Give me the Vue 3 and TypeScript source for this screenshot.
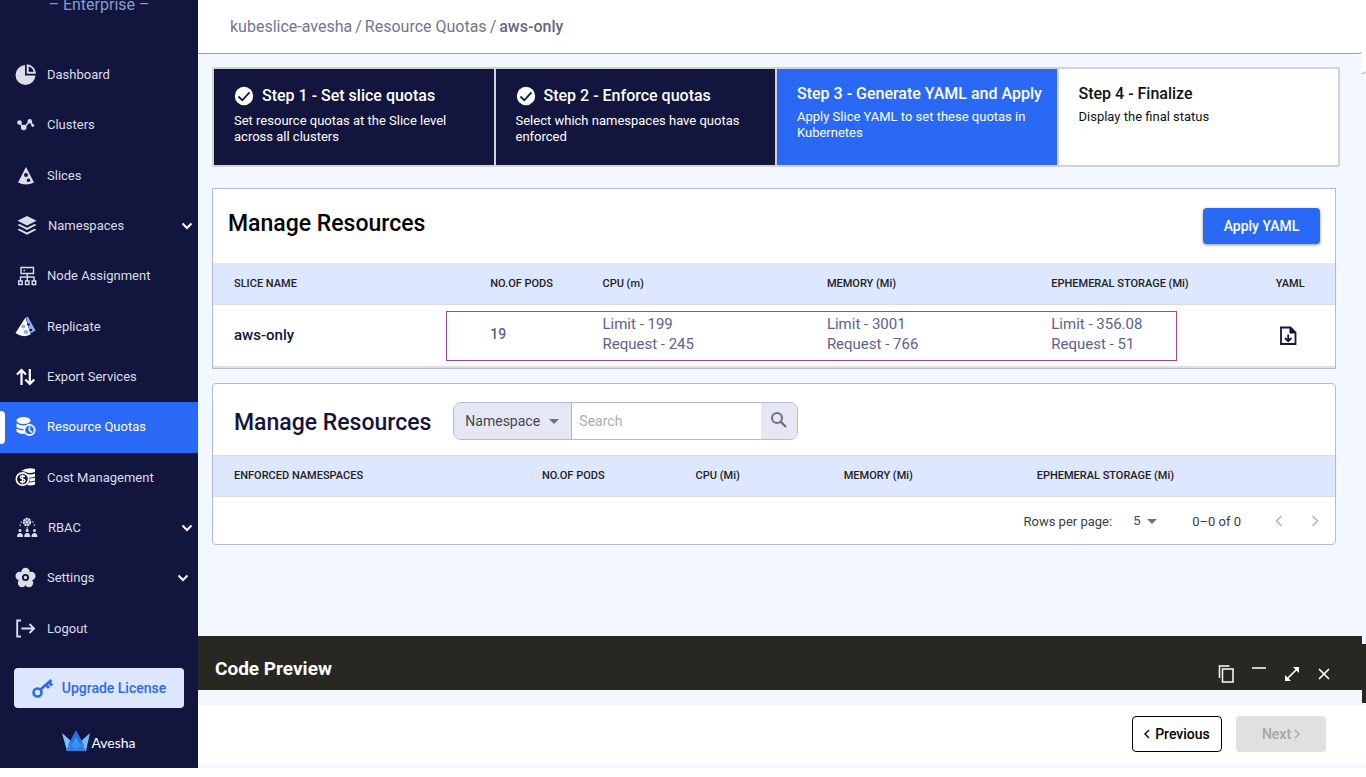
<script setup lang="ts">
import { ref } from 'vue'

interface NavItem {
  label: string
  icon: string
  indent?: boolean
  chevron?: boolean
  active?: boolean
}

const navItems: NavItem[] = [
  { label: 'Dashboard', icon: 'dashboard' },
  { label: 'Clusters', icon: 'clusters' },
  { label: 'Slices', icon: 'slices' },
  { label: 'Namespaces', icon: 'layers', indent: true, chevron: true },
  { label: 'Node Assignment', icon: 'nodes' },
  { label: 'Replicate', icon: 'replicate' },
  { label: 'Export Services', icon: 'export' },
  { label: 'Resource Quotas', icon: 'quotas', active: true },
  { label: 'Cost Management', icon: 'cost' },
  { label: 'RBAC', icon: 'rbac', indent: true, chevron: true },
  { label: 'Settings', icon: 'settings', chevron: true },
  { label: 'Logout', icon: 'logout' },
]

const steps = [
  { title: 'Step 1 - Set slice quotas', text: 'Set resource quotas at the Slice level across all clusters', state: 'done' },
  { title: 'Step 2 - Enforce quotas', text: 'Select which namespaces have quotas enforced', state: 'done' },
  { title: 'Step 3 - Generate YAML and Apply', text: 'Apply Slice YAML to set these quotas in Kubernetes', state: 'current' },
  { title: 'Step 4 - Finalize', text: 'Display the final status', state: 'todo' },
]

const sliceColumns = ['SLICE NAME', 'NO.OF PODS', 'CPU (m)', 'MEMORY (Mi)', 'EPHEMERAL STORAGE (Mi)', 'YAML']
const slices = [
  {
    name: 'aws-only',
    pods: 19,
    usage: [
      { limit: '199', request: '245' },
      { limit: '3001', request: '766' },
      { limit: '356.08', request: '51' },
    ],
  },
]
const namespaceColumns = ['ENFORCED NAMESPACES', 'NO.OF PODS', 'CPU (Mi)', 'MEMORY (Mi)', 'EPHEMERAL STORAGE (Mi)']

const searchField = ref('Namespace')
const search = ref('')
const rowsPerPage = ref('5')
</script>

<template>
  <div class="app">
    <aside class="sidebar">
      <div class="edition">– Enterprise –</div>
      <nav class="nav">
        <a v-for="item in navItems" :key="item.label" href="#" class="nav-item" :class="{ active: item.active, indent: item.indent }">
          <svg class="nav-icon" viewBox="0 0 22 22" aria-hidden="true">
            <g v-if="item.icon === 'dashboard'" fill="currentColor">
              <path d="M10 1A10 10 0 1 0 20.500 11.500H10z" />
              <path fill-rule="evenodd" d="M11.700 .3A9.600 9.600 0 0 1 21 9.700H11.700zM13.700 2.500V7.800h5A7 7 0 0 0 13.700 2.500z" />
            </g>
            <g v-else-if="item.icon === 'clusters'" fill="currentColor">
              <path d="M4.500 8.500l4 5.500L15 7l3 5" fill="none" stroke="currentColor" stroke-width="1.500" />
              <circle cx="4.500" cy="8.500" r="2.300" /><circle cx="8.700" cy="13.500" r="2.800" />
              <circle cx="14.800" cy="7.300" r="2.300" /><circle cx="17.800" cy="11.500" r="1.400" />
            </g>
            <path v-else-if="item.icon === 'slices'" fill="currentColor" fill-rule="evenodd"
              d="M11 2L3 17.500q8 4 16 0zM11 8a2 2 0 1 1 0 4 2 2 0 0 1 0-4zM13.500 13.500a1.800 1.800 0 1 1 0 3.600 1.800 1.800 0 0 1 0-3.600z" />
            <g v-else-if="item.icon === 'layers'" fill="currentColor">
              <path d="M11 1L1.500 5.700l9.500 4.800 9.500-4.800z" />
              <path d="M1.500 10l2-1 7.500 3.800L18.500 9l2 1-9.500 5zM1.500 14.800l2-1 7.500 3.800 7.500-3.800 2 1-9.500 5z" />
            </g>
            <g v-else-if="item.icon === 'nodes'" fill="none" stroke="currentColor" stroke-width="1.400">
              <path d="M6 2.500h12.500v6H6zM8.500 5.500H10M12.200 8.500V16M5.500 16v-4h13.500v4" />
              <path d="M3.700 16h3.500v3.500H3.700zM10.500 16H14v3.500h-3.500zM17.200 16h3.500v3.500h-3.500z" />
            </g>
            <g v-else-if="item.icon === 'replicate'">
              <path d="M11 1h2l7.500 13.500-5 3z" fill="#8db2fb" />
              <path d="M10.500 1.500L.5 17q7 5.500 15 1.500z" fill="#fff" />
              <g fill="#8db2fb"><circle cx="8.300" cy="10.500" r="2.100" /><circle cx="11" cy="16" r="2.200" /></g>
              <g fill="#12153d"><circle cx="13.500" cy="8.500" r="1.200" /><circle cx="16" cy="14" r="1.300" /></g>
            </g>
            <path v-else-if="item.icon === 'export'" fill="none" stroke="#fff" stroke-width="2.200"
              d="M6.500 19V4.500M2 8.500l4.500-4.500L11 8.500M14.800 3v14M10.300 13.500l4.500 4.500 4.500-4.500" />
            <g v-else-if="item.icon === 'quotas'" fill="#fff">
              <ellipse cx="8.500" cy="4.500" rx="7" ry="3.500" />
              <path d="M1.500 7.500q7 4 14 0v2q-5 .5-6 3.500-5 .5-8-2zM1.500 12.500q3.500 2 7.500 2 0 2 .8 3.500-6 0-8.300-2.500z" />
              <circle cx="14.500" cy="14" r="5.200" fill="#2969f6" stroke="#fff" stroke-width="1.700" />
              <path d="M14.500 10.500v4l2.500 1.800" fill="none" stroke="#fff" stroke-width="1.500" />
            </g>
            <g v-else-if="item.icon === 'cost'" fill="#fff">
              <path d="M6 4q6-4 14-2v3q-6 2-9 0-3-1-5-1zM12 7q4 1 8-.5v3q-3 1.500-6 1zM14.500 11.500q3 .3 5.500-1v3q-2 1.300-5.500 1zM14 15.500q4 0 6-1v3q-4 1.500-8 .5z" />
              <circle cx="7.500" cy="12" r="6.200" fill="#12153d" stroke="#fff" stroke-width="1.700" />
              <path d="M10 9.700q-2.500-1.500-4.200-.5-1.300 1.800 1.700 2.700 3.300.8 2 2.700-1.700 1.200-4.500-.3M7.500 7.500v9" fill="none" stroke="#fff" stroke-width="1.400" />
            </g>
            <g v-else-if="item.icon === 'rbac'" fill="currentColor">
              <circle cx="11" cy="5" r="3" fill="none" stroke="currentColor" stroke-width="2.500" stroke-dasharray="2 .5" />
              <circle cx="11" cy="5" r="1.500" />
              <path d="M6 4.500q-2 .5-2 6M16 4.500q2.500.5 2.500 6M11.200 10v3" fill="none" stroke="currentColor" stroke-dasharray="2 1.500" />
              <circle cx="4" cy="13.500" r="1.500" /><circle cx="11.200" cy="13.500" r="1.500" /><circle cx="18.500" cy="13.500" r="1.500" />
              <path d="M1 20q0-4 3-4t3 4zM8.200 20q0-4 3-4t3 4zM15.500 20q0-4 3-4t3 4z" />
            </g>
            <g v-else-if="item.icon === 'settings'" fill="currentColor">
              <circle cx="10.500" cy="5" r="4.200" /><circle cx="4.700" cy="9" r="4.200" /><circle cx="16.300" cy="9" r="4.200" />
              <circle cx="7" cy="16" r="4.200" /><circle cx="14" cy="16" r="4.200" /><circle cx="10.500" cy="11" r="6" />
              <circle cx="10.500" cy="10.500" r="2.600" fill="none" stroke="#12153d" stroke-width="1.900" />
            </g>
            <g v-else fill="none" stroke="currentColor" stroke-width="1.900">
              <path d="M6 2.500H2.200v16H6M6.500 10.500h12.500M14.500 6l4.500 4.500-4.500 4.500" />
            </g>
          </svg>
          <span class="nav-label">{{ item.label }}</span>
          <svg v-if="item.chevron" class="chevron" viewBox="0 0 12 12" aria-hidden="true">
            <path d="M1.500 3.500L6 8l4.500-4.500" fill="none" stroke="#fff" stroke-width="2" />
          </svg>
        </a>
      </nav>
      <div class="side-foot">
        <button type="button" class="upgrade">
          <svg viewBox="0 0 22 20" width="22" height="20" aria-hidden="true" fill="none" stroke="#2969f6">
            <circle cx="5.500" cy="14.500" r="4" stroke-width="2.500" />
            <path d="M8.500 11.500L19.500 2M14 6.500l3 3.500M17 4l3 3.500" stroke-width="2.700" />
          </svg>
          Upgrade License
        </button>
        <div class="brand">
          <svg viewBox="0 0 28 22" width="28" height="22" aria-hidden="true">
            <path d="M0 3l10 9-3 9H5z" fill="#7cc3f8" />
            <path d="M28 3l-10 9 3 9h3z" fill="#6bbcf7" />
            <path d="M14 0L6 15l8 6 8-6z" fill="#2b6de4" />
            <path d="M14 7L9 16l5 5 5-5z" fill="#2f97ee" />
            <path d="M4 21l4-9 3 3-6 6zM24 21l-4-9-3 3 6 6z" fill="#3a86e8" />
            <path d="M5 21l4.500-5 4.500 3 4.500-3 4.500 5z" fill="#3478e6" />
          </svg>
          <span>Avesha</span>
        </div>
      </div>
    </aside>

    <main class="main">
      <header class="crumbs">
        <a href="#">kubeslice-avesha</a><span>/</span><a href="#">Resource Quotas</a><span>/</span><b>aws-only</b>
      </header>

      <div class="content">
        <ol class="steps">
          <li v-for="step in steps" :key="step.title" class="step" :class="step.state">
            <div class="step-title">
              <svg v-if="step.state === 'done'" viewBox="0 0 20 20" width="20" height="20" aria-hidden="true">
                <circle cx="10" cy="10" r="9.200" fill="#fff" />
                <path d="M4.500 10.500l3.800 3.800 7.200-8" fill="none" stroke="#12153d" stroke-width="1.800" />
              </svg>
              {{ step.title }}
            </div>
            <p>{{ step.text }}</p>
          </li>
        </ol>

        <section class="card slices-card">
          <div class="card-head">
            <h2>Manage Resources</h2>
            <button type="button" class="apply">Apply YAML</button>
          </div>
          <div class="table-wrap">
            <table class="slice-table">
              <thead>
                <tr><th v-for="c in sliceColumns" :key="c" scope="col">{{ c }}</th></tr>
              </thead>
              <tbody>
                <tr v-for="s in slices" :key="s.name">
                  <td class="name">{{ s.name }}</td>
                  <td class="pods">{{ s.pods }}</td>
                  <td v-for="(u, i) in s.usage" :key="i" class="usage">
                    <div>Limit - {{ u.limit }}</div>
                    <div>Request - {{ u.request }}</div>
                  </td>
                  <td class="file">
                    <button type="button" class="icon-btn" aria-label="Download YAML">
                      <svg viewBox="0 0 18 20" width="18" height="20" aria-hidden="true" fill="none" stroke="#12153d" stroke-width="1.800">
                        <path d="M2 1.500h9.500l5 5V18H2z" />
                        <path d="M11 1v6h6z" fill="#12153d" stroke-width="1" />
                        <path d="M9.200 8.500v6.500M6 12l3.200 3.200L12.400 12" />
                      </svg>
                    </button>
                  </td>
                </tr>
              </tbody>
            </table>
            <div class="highlight"></div>
          </div>
        </section>

        <section class="card ns-card">
          <div class="ns-head">
            <h2>Manage Resources</h2>
            <form class="search" role="search" @submit.prevent>
              <div class="select-wrap">
                <select v-model="searchField" aria-label="Search by"><option>Namespace</option></select>
                <svg class="caret" viewBox="0 0 10 5" aria-hidden="true"><path d="M0 0h10L5 5z" fill="#707078" /></svg>
              </div>
              <input v-model="search" type="text" placeholder="Search" aria-label="Search" />
              <button type="submit" aria-label="Run search">
                <svg viewBox="0 0 18 18" width="18" height="18" aria-hidden="true" fill="none" stroke="#707078" stroke-width="2">
                  <circle cx="7" cy="7" r="5" /><path d="M10.500 10.500L16 16" stroke-width="2.400" />
                </svg>
              </button>
            </form>
          </div>
          <table class="ns-table">
            <thead>
              <tr><th v-for="c in namespaceColumns" :key="c" scope="col">{{ c }}</th></tr>
            </thead>
          </table>
          <div class="pager">
            <label for="rows">Rows per page:</label>
            <div class="rows-wrap">
              <select id="rows" v-model="rowsPerPage"><option>5</option></select>
              <svg class="caret" viewBox="0 0 10 5" aria-hidden="true"><path d="M0 0h10L5 5z" fill="#707078" /></svg>
            </div>
            <span class="range">0–0 of 0</span>
            <button type="button" class="icon-btn" disabled aria-label="Previous page">
              <svg viewBox="0 0 8 12" width="8" height="12"><path d="M6.500 1L1.500 6l5 5" fill="none" stroke="#b8b8b8" stroke-width="1.700" /></svg>
            </button>
            <button type="button" class="icon-btn" disabled aria-label="Next page">
              <svg viewBox="0 0 8 12" width="8" height="12"><path d="M1.500 1l5 5-5 5" fill="none" stroke="#b8b8b8" stroke-width="1.700" /></svg>
            </button>
          </div>
        </section>
      </div>

      <section class="code-bar">
        <h3>Code Preview</h3>
        <div class="code-tools">
          <button type="button" class="icon-btn" aria-label="Copy">
            <svg viewBox="0 0 16 18" width="16" height="18" fill="none" stroke="#fff" stroke-width="1.500"><path d="M4.500 4H15v13H4.500zM1.500 13V1h10" /></svg>
          </button>
          <button type="button" class="icon-btn minimize" aria-label="Minimize">
            <svg viewBox="0 0 14 2" width="14" height="2"><path d="M0 0h14v2H0z" fill="#c9c9c6" /></svg>
          </button>
          <button type="button" class="icon-btn" aria-label="Expand">
            <svg viewBox="0 0 16 16" width="16" height="16"><path d="M3.500 12.500l9-9" stroke="#fff" stroke-width="1.700" /><path d="M9 1h6v6zM1 9v6h6z" fill="#fff" /></svg>
          </button>
          <button type="button" class="icon-btn" aria-label="Close">
            <svg viewBox="0 0 12 12" width="12" height="12"><path d="M1 1l10 10M11 1L1 11" stroke="#fff" stroke-width="1.600" /></svg>
          </button>
        </div>
      </section>

      <footer class="actions">
        <button type="button" class="prev">
          <svg viewBox="0 0 6 10" width="6" height="10"><path d="M5 1L1 5l4 4" fill="none" stroke="currentColor" stroke-width="1.400" /></svg>
          Previous
        </button>
        <button type="button" class="next" disabled>
          Next
          <svg viewBox="0 0 6 10" width="6" height="10"><path d="M1 1l4 4-4 4" fill="none" stroke="currentColor" stroke-width="1.400" /></svg>
        </button>
      </footer>
    </main>

    <div class="rail">
      <div class="rail-top"></div>
      <div class="rail-code"></div>
      <div class="rail-foot"></div>
    </div>
  </div>
</template>

<style>
body {
  margin: 0;
  background: #fff;
}
</style>

<style scoped>
* {
  box-sizing: border-box;
}
.app {
  display: flex;
  min-height: calc(100vh - 9px);
  background: #f3f7ff;
  font-family: Roboto, "Noto Sans", sans-serif;
  font-size: 14px;
  color: #222;
}
button, input, select {
  font: inherit;
  color: inherit;
}
button {
  cursor: pointer;
}
h2, h3, p, ol {
  margin: 0;
  padding: 0;
}

.sidebar {
  display: flex;
  flex-direction: column;
  flex: none;
  width: 198px;
  background: #12153d;
}
.edition {
  height: 50px;
  line-height: 20px;
  margin-top: -5px;
  margin-bottom: 5px;
  text-align: center;
  font-size: 16px;
  color: #829dd2;
}
.nav {
  flex: 1;
  display: flex;
  flex-direction: column;
}
.nav-item {
  position: relative;
  flex: 1;
  display: flex;
  align-items: center;
  padding: 0 9px 0 15px;
  color: #dcdde8;
  font-size: 13px;
  text-decoration: none;
}
.nav-icon {
  width: 22px;
  height: 22px;
  margin-right: 10px;
}
.nav-item.indent {
  padding: 0 5px 0 16px;
}
.nav-label {
  flex: 1;
  padding-bottom: 1px;
}
.chevron {
  width: 12px;
  height: 12px;
}
.nav-item.active {
  background: #2969f6;
  color: #fff;
}
.nav-item.active::before {
  content: '';
  position: absolute;
  left: 0;
  top: 9px;
  bottom: 9px;
  width: 5px;
  background: #fff;
  border-radius: 0 4px 4px 0;
}
.side-foot {
  padding: 14px 14px 16px;
}
.upgrade {
  display: flex;
  align-items: center;
  justify-content: center;
  gap: 8px;
  width: 100%;
  height: 40px;
  border: 0;
  border-radius: 4px;
  background: #dde7ff;
  color: #2969f6;
  font-size: 14px;
  font-weight: 500;
}
.brand {
  display: flex;
  align-items: center;
  justify-content: center;
  gap: 1px;
  margin-top: 22px;
  height: 22px;
  font-family: Lato, sans-serif;
  font-size: 14px;
  color: #fff;
}
.brand span {
  padding-top: 3px;
}

.main {
  flex: 1;
  min-width: 0;
  display: flex;
  flex-direction: column;
}
.crumbs {
  display: flex;
  align-items: center;
  gap: 3px;
  height: 54px;
  padding: 0 32px;
  background: #fff;
  border-bottom: 1px solid #9a9fa8;
  border-radius: 0 0 4px 0;
  font-size: 16px;
  color: #74758c;
}
.crumbs a {
  color: inherit;
  text-decoration: none;
}
.crumbs b {
  font-weight: 500;
  color: #656681;
}
.content {
  flex: 1;
  padding: 13px 26px 0 14px;
}

.steps {
  display: grid;
  grid-template-columns: repeat(4, minmax(0, 1fr));
  gap: 2px;
  margin-right: -4px;
  padding: 2px;
  height: 100px;
  list-style: none;
  background: #d2d3d4;
  border-radius: 2px;
}
.step {
  padding: 17px 20px;
  background: #12153d;
  color: #fff;
  font-size: 13px;
  line-height: 16px;
}
.step-title {
  display: flex;
  align-items: center;
  gap: 8px;
  height: 20px;
  margin-bottom: 7px;
  font-size: 16px;
  font-weight: 500;
  white-space: nowrap;
}
.step.current, .step.todo {
  padding-top: 15px;
}
.step.current .step-title, .step.todo .step-title {
  margin-bottom: 5px;
}
.step.current {
  background: #2969f6;
}
.step.todo {
  background: #fff;
  color: #111;
}

.card {
  background: #fff;
  border: 1px solid #b4b8dc;
}
.slices-card {
  margin-top: 21px;
}
.card-head {
  display: flex;
  align-items: center;
  justify-content: space-between;
  height: 74px;
  padding: 0 15px;
}
h2 {
  font-size: 23px;
  line-height: 28px;
  font-weight: 500;
  color: #000;
}
.card-head h2 {
  padding-bottom: 4px;
}
.apply {
  width: 117px;
  height: 36px;
  border: 0;
  border-radius: 4px;
  background: #2969f6;
  color: #fff;
  font-weight: 500;
  box-shadow: 0 1px 3px rgba(0, 0, 0, 0.45);
}
table {
  width: 100%;
  table-layout: fixed;
  border-collapse: separate;
  border-spacing: 0;
}
th {
  height: 42px;
  padding: 0 0 0 17px;
  text-align: left;
  white-space: nowrap;
  background: #dde7ff;
  border-bottom: 1px solid #dcdcdf;
  font-size: 11px;
  font-weight: 500;
  color: #222;
}
th:first-child, td:first-child {
  padding-left: 21px;
}
td {
  height: 63px;
  padding: 0 0 0 17px;
  border-bottom: 2px solid #e0e0e0;
}
.slice-table th:nth-child(1) { width: 23.2%; }
.slice-table th:nth-child(2) { width: 10%; }
.slice-table th:nth-child(3),
.slice-table th:nth-child(4),
.slice-table th:nth-child(5) { width: 20%; }
td.name {
  padding-bottom: 2px;
  font-size: 15px;
  font-weight: 500;
  color: #12153d;
}
td.pods {
  padding-bottom: 4px;
  font-weight: 500;
  color: #5f628a;
}
td.usage {
  padding-bottom: 4px;
  font-size: 15px;
  line-height: 20px;
  color: #5f628a;
}
.table-wrap {
  position: relative;
}
.highlight {
  position: absolute;
  left: 20.8%;
  right: 14.1%;
  bottom: 7px;
  height: 50px;
  border: 1px solid #a045a0;
  pointer-events: none;
}
.icon-btn {
  display: flex;
  align-items: center;
  justify-content: center;
  padding: 0;
  border: 0;
  background: none;
}
.file {
  padding-left: 20px;
}

.ns-card {
  margin-top: 14px;
  border-radius: 4px;
}
.ns-head {
  display: flex;
  align-items: center;
  gap: 22px;
  height: 71px;
  padding: 0 21px;
}
.ns-head h2 {
  color: #12153d;
  padding-top: 6px;
}
.search {
  display: flex;
  width: 345px;
  height: 38px;
  margin-top: 2px;
  border: 1px solid #b4b8dc;
  border-radius: 8px;
  overflow: hidden;
  font-size: 14px;
}
.select-wrap {
  position: relative;
  width: 118px;
  background: #e5e8f4;
  border-right: 1px solid #b0b3c8;
}
select {
  appearance: none;
  border: 0;
  background: none;
  color: #454550;
}
.select-wrap select {
  width: 100%;
  height: 100%;
  padding: 0 24px 0 11px;
}
.caret {
  position: absolute;
  right: 12px;
  top: 50%;
  width: 10px;
  height: 5px;
  margin-top: -2px;
  pointer-events: none;
}
.search input {
  flex: 1;
  min-width: 0;
  padding: 0 7px;
  border: 0;
  outline: 0;
}
.search input::placeholder {
  color: #adadb3;
}
.search button {
  display: flex;
  align-items: center;
  justify-content: center;
  width: 36px;
  padding: 0 0 2px;
  border: 0;
  background: #e5e8f4;
}
.ns-table th {
  padding-bottom: 2px;
  border-top: 1px solid #dcdcdf;
}
.ns-table th:nth-child(1) { width: 27.8%; }
.ns-table th:nth-child(2) { width: 13.7%; }
.ns-table th:nth-child(3) { width: 13.2%; }
.ns-table th:nth-child(4) { width: 17.2%; }
.pager {
  display: flex;
  align-items: center;
  justify-content: flex-end;
  height: 47px;
  padding-right: 16px;
  font-size: 13px;
  color: #3b3b40;
}
.pager label, .range {
  padding-top: 2px;
}
.rows-wrap {
  position: relative;
  width: 44px;
  margin-left: 1px;
}
.rows-wrap select {
  width: 100%;
  padding: 0 14px 0 20px;
}
.rows-wrap .caret {
  right: 0;
}
.range {
  margin-left: 35px;
  margin-right: 34px;
}
.pager .icon-btn + .icon-btn {
  margin-left: 28px;
}

.code-bar {
  display: flex;
  justify-content: space-between;
  align-items: center;
  height: 54px;
  padding: 12px 32px 0 17px;
  background: #272822;
}
h3 {
  font-size: 19px;
  line-height: 24px;
  font-weight: 700;
  color: #fff;
}
.code-tools {
  display: flex;
  align-items: center;
  gap: 18px;
  padding-top: 10px;
}
.minimize {
  padding-bottom: 12px;
}
.actions {
  display: flex;
  justify-content: flex-end;
  align-items: center;
  gap: 14px;
  height: 59px;
  margin-top: 15px;
  margin-bottom: 4px;
  padding: 0 36px 2px 0;
  background: #fff;
}
.actions button {
  display: flex;
  align-items: center;
  justify-content: center;
  gap: 5px;
  width: 90px;
  height: 36px;
  padding: 0;
  border-radius: 4px;
  font-size: 14px;
  font-weight: 500;
}
.prev {
  border: 1px solid #000;
  background: #fff;
  color: #000;
}
.actions .next {
  gap: 3px;
  border: 0;
  background: #e0e0e0;
  color: #a6a6a6;
}

.rail {
  display: flex;
  flex-direction: column;
  flex: none;
  width: 4px;
}
.rail-top {
  height: 74px;
  background: #fff;
  border-bottom: 1px solid #9a9fa8;
  border-radius: 0 0 4px 0;
}
.rail-code {
  height: 59px;
  margin-top: auto;
  background: #272822;
}
.rail-foot {
  height: 59px;
  margin: 2px 0 4px;
  background: #fff;
}
</style>
